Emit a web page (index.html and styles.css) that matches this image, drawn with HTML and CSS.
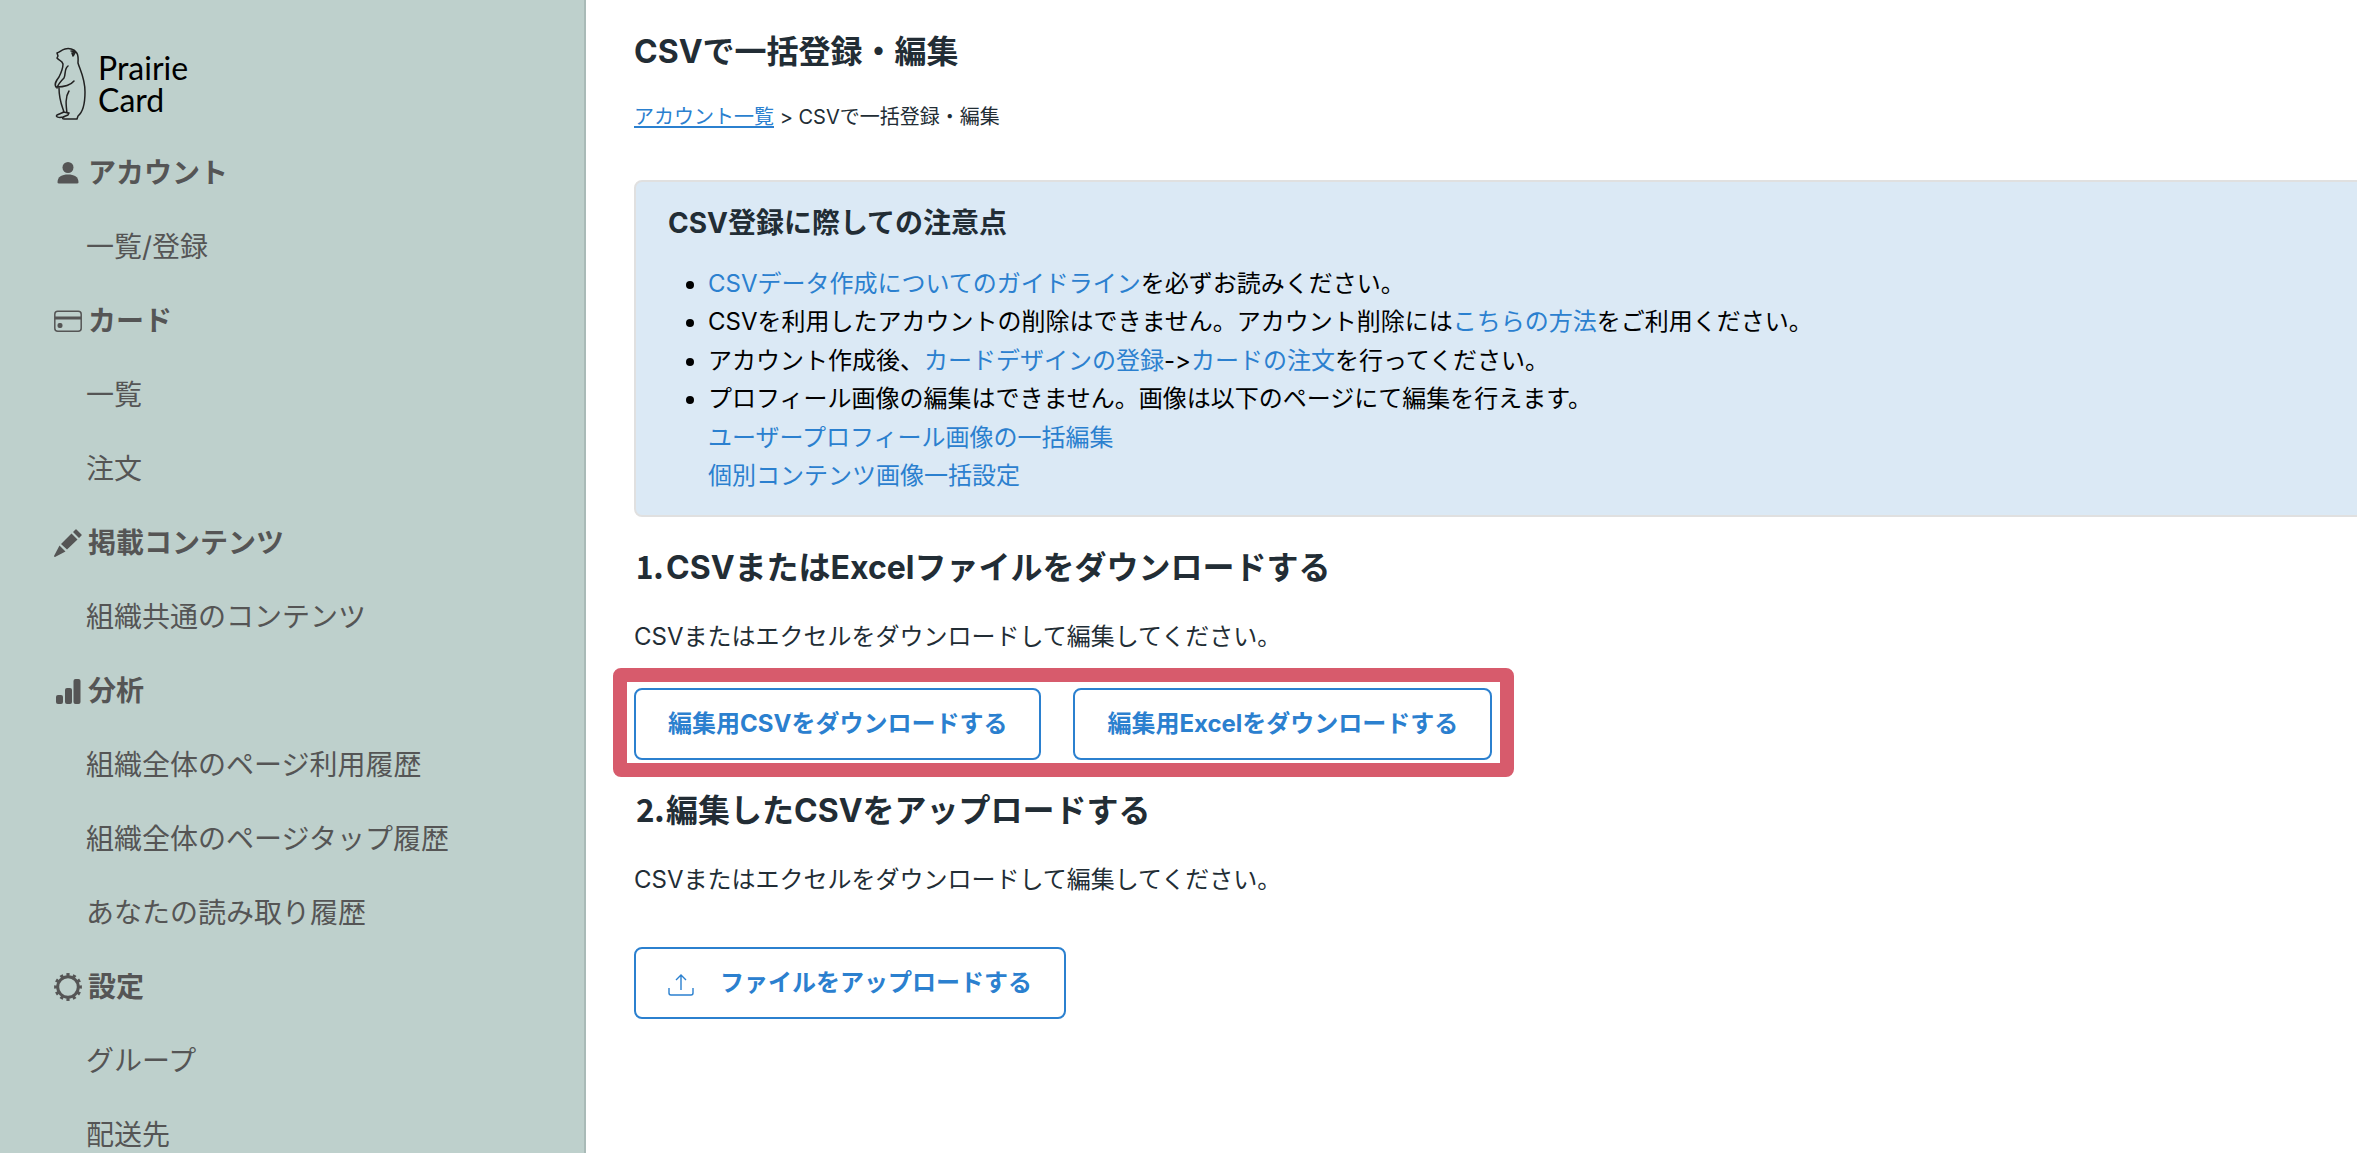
FILE: index.html
```html
<!DOCTYPE html>
<html lang="ja">
<head>
<meta charset="utf-8">
<meta name="viewport" content="width=device-width, initial-scale=1">
<title>CSVで一括登録・編集</title>
<link rel="stylesheet" href="styles.css">
</head>
<body>
<div class="layout">
  <aside class="sidebar">
    <a class="logo" href="#">
      <svg class="logo-mark" viewBox="0 0 34 74" aria-hidden="true">
        <path d="M3 6C6 5 7 3 11 2C15 1 20 2 22 5C25 8 24 12 24 16C26 23 31 31 31 45C31 56 29 65 24 69L23 72H10C8 72 8 70 10 70M3 6L4 9L3 11C5 14 8 13 9 17C9 22 7 26 5 30C2 34 0 37 2 40C8 40 16 39 20 34M14 19C10 22 12 27 10 31C7 34 4 37 3 41M5 41C5 53 8 59 10 65L3 68C1 70 5 71 9 70L14 68L15 66L9 65M15 44C11 50 12 58 13 66M17 4C21 4 21 7 19 9L18 6L21 6"/>
      </svg>
      <span class="logo-text">Prairie<br>Card</span>
    </a>
    <nav>
      <ul class="menu">
        <li class="menu-head">
          <svg class="icon" viewBox="0 0 28 28" aria-hidden="true"><circle cx="14" cy="8.500" r="5.500"/><path d="M3.500 23.500C3.500 17.500 8 15.500 14 15.500S24.500 17.500 24.500 23.500Q24.500 24.500 23 24.500H5Q3.500 24.500 3.500 23.500Z"/></svg>アカウント
        </li>
        <li><a href="#">一覧/登録</a></li>
        <li class="menu-head">
          <svg class="icon" viewBox="0 0 28 28" aria-hidden="true"><rect class="line" x="0.800" y="4.300" width="26.400" height="20" rx="3"/><path d="M1 9.500H27V12.500H1Z"/><rect x="3.500" y="16" width="5" height="5" rx="2"/></svg>カード
        </li>
        <li><a href="#">一覧</a></li>
        <li><a href="#">注文</a></li>
        <li class="menu-head">
          <svg class="icon" viewBox="0 0 28 28" aria-hidden="true"><path d="M21.500 .5Q22 0 22.500 .5L27.500 5.500Q28 6 27.500 6.500L25 9L19 3ZM17.500 4.500L23.500 10.500L13 20.500L7 15ZM5.500 16.500L11.500 22.500L1 28Q0 28 0 27Z"/></svg>掲載コンテンツ
        </li>
        <li><a href="#">組織共通のコンテンツ</a></li>
        <li class="menu-head">
          <svg class="icon" viewBox="0 0 28 28" aria-hidden="true"><rect x="2" y="18" width="7" height="9" rx="2"/><rect x="11" y="11" width="7" height="16" rx="2"/><rect x="19.500" y="2" width="7" height="25" rx="2"/></svg>分析
        </li>
        <li><a href="#">組織全体のページ利用履歴</a></li>
        <li><a href="#">組織全体のページタップ履歴</a></li>
        <li><a href="#">あなたの読み取り履歴</a></li>
        <li class="menu-head">
          <svg class="icon" viewBox="0 0 28 28" aria-hidden="true"><circle class="gear-ring" cx="14" cy="14" r="10.300"/><circle class="gear-teeth" cx="14" cy="14" r="12.400" pathLength="24"/></svg>設定
        </li>
        <li><a href="#">グループ</a></li>
        <li><a href="#">配送先</a></li>
      </ul>
    </nav>
  </aside>
  <main class="content">
    <h1>CSVで一括登録・編集</h1>
    <nav class="breadcrumb"><a href="#">アカウント一覧</a> &gt; CSVで一括登録・編集</nav>
    <section class="notice">
      <h2>CSV登録に際しての注意点</h2>
      <ul>
        <li><a href="#">CSVデータ作成についてのガイドライン</a>を必ずお読みください。</li>
        <li>CSVを利用したアカウントの削除はできません。アカウント削除には<a href="#">こちらの方法</a>をご利用ください。</li>
        <li>アカウント作成後、<a href="#">カードデザインの登録</a>-&gt;<a href="#">カードの注文</a>を行ってください。</li>
        <li>プロフィール画像の編集はできません。画像は以下のページにて編集を行えます。<br><a href="#">ユーザープロフィール画像の一括編集</a><br><a href="#">個別コンテンツ画像一括設定</a></li>
      </ul>
    </section>
    <section class="step">
      <h2>⒈CSVまたはExcelファイルをダウンロードする</h2>
      <p>CSVまたはエクセルをダウンロードして編集してください。</p>
      <div class="downloads">
        <button type="button">編集用CSVをダウンロードする</button>
        <button type="button">編集用Excelをダウンロードする</button>
      </div>
    </section>
    <section class="step upload">
      <h2>⒉編集したCSVをアップロードする</h2>
      <p>CSVまたはエクセルをダウンロードして編集してください。</p>
      <button type="button"><svg class="upload-icon" viewBox="0 0 26 26" aria-hidden="true"><path d="M1 18V23Q1 25 3 25H23Q25 25 25 23V18M13 20V5M8 10L13 5L18 10"/></svg>ファイルをアップロードする</button>
    </section>
  </main>
</div>
</body>
</html>
```
FILE: styles.css
```css
* { box-sizing: border-box; }

body {
  margin: 0;
  background: #fff;
  color: #222d35;
  font-family: Inter, "Noto Sans CJK JP", sans-serif;
  font-size: 24px;
  line-height: 1.6;
  font-variant-ligatures: no-contextual;
}

h1, h2, p, ul { margin: 0; padding: 0; }

a { color: #2b80cf; text-decoration: none; }

.layout {
  display: flex;
  height: 100vh;
  overflow: hidden;
}

/* Sidebar */
.sidebar {
  flex: 0 0 586px;
  padding: 47px 54px 0;
  background: #bed0cc;
  border-right: 2px solid #a9bab7;
  overflow: hidden;
}

.logo {
  display: flex;
  gap: 10px;
  height: 89px;
  color: #000;
}

.logo-mark {
  width: 34px;
  height: 74px;
  fill: none;
  stroke: #222;
  stroke-width: 1.5;
  stroke-linejoin: round;
  stroke-linecap: round;
}

.logo-text {
  padding-top: 5px;
  font-family: Lato, sans-serif;
  font-size: 32px;
  line-height: 32px;
}

.menu { list-style: none; font-size: 28px; line-height: 74px; }
.menu li { padding-left: 32px; color: #555; white-space: nowrap; }
.menu a { color: inherit; }

.menu .menu-head {
  display: flex;
  align-items: center;
  gap: 6px;
  padding-left: 0;
  font-weight: 700;
}

.icon { width: 28px; height: 28px; fill: #555; }
.icon .line { fill: none; stroke: #555; stroke-width: 1.5; }
.icon .gear-ring { fill: none; stroke: #555; stroke-width: 3; }
.icon .gear-teeth { fill: none; stroke: #555; stroke-width: 3; stroke-dasharray: 1; stroke-dashoffset: 0.5; }

/* Main column */
.content {
  flex: 1;
  min-width: 0;
  padding: 28px 0 0 48px;
  overflow: hidden;
}

h1 { font-size: 32px; line-height: 48px; }

.breadcrumb { margin-top: 25px; font-size: 20px; line-height: 32px; }
.breadcrumb a { text-decoration: underline; text-underline-offset: 2px; text-decoration-thickness: 2px; }

.notice {
  margin: 47px -8px 0 0;
  padding: 20px 32px;
  background: #dbe9f5;
  border: 2px solid #e0e0e0;
  border-radius: 8px;
}

.notice h2 { font-size: 28px; line-height: 42px; }
.notice ul { margin-top: 21px; padding-left: 40px; color: #000; }

.step h2 { font-size: 32px; line-height: 48px; }
.step { margin-top: 27px; }
.step p { margin-top: 26px; }

.downloads {
  position: relative;
  display: flex;
  gap: 32px;
  width: fit-content;
  margin-top: 31px;
}

.downloads::after {
  content: "";
  position: absolute;
  inset: -20px -22px -17px -21px;
  border: 14px solid #d75b6c;
  border-radius: 8px;
  pointer-events: none;
}

button {
  display: flex;
  align-items: center;
  height: 72px;
  padding: 0 32px;
  background: #fff;
  border: 2px solid #2b80cf;
  border-radius: 8px;
  color: #2b80cf;
  font: inherit;
  font-weight: 700;
}

.upload button { gap: 26px; margin-top: 48px; }
.upload-icon { width: 26px; height: 26px; fill: none; stroke: #2b80cf; stroke-width: 1.4; }
```
